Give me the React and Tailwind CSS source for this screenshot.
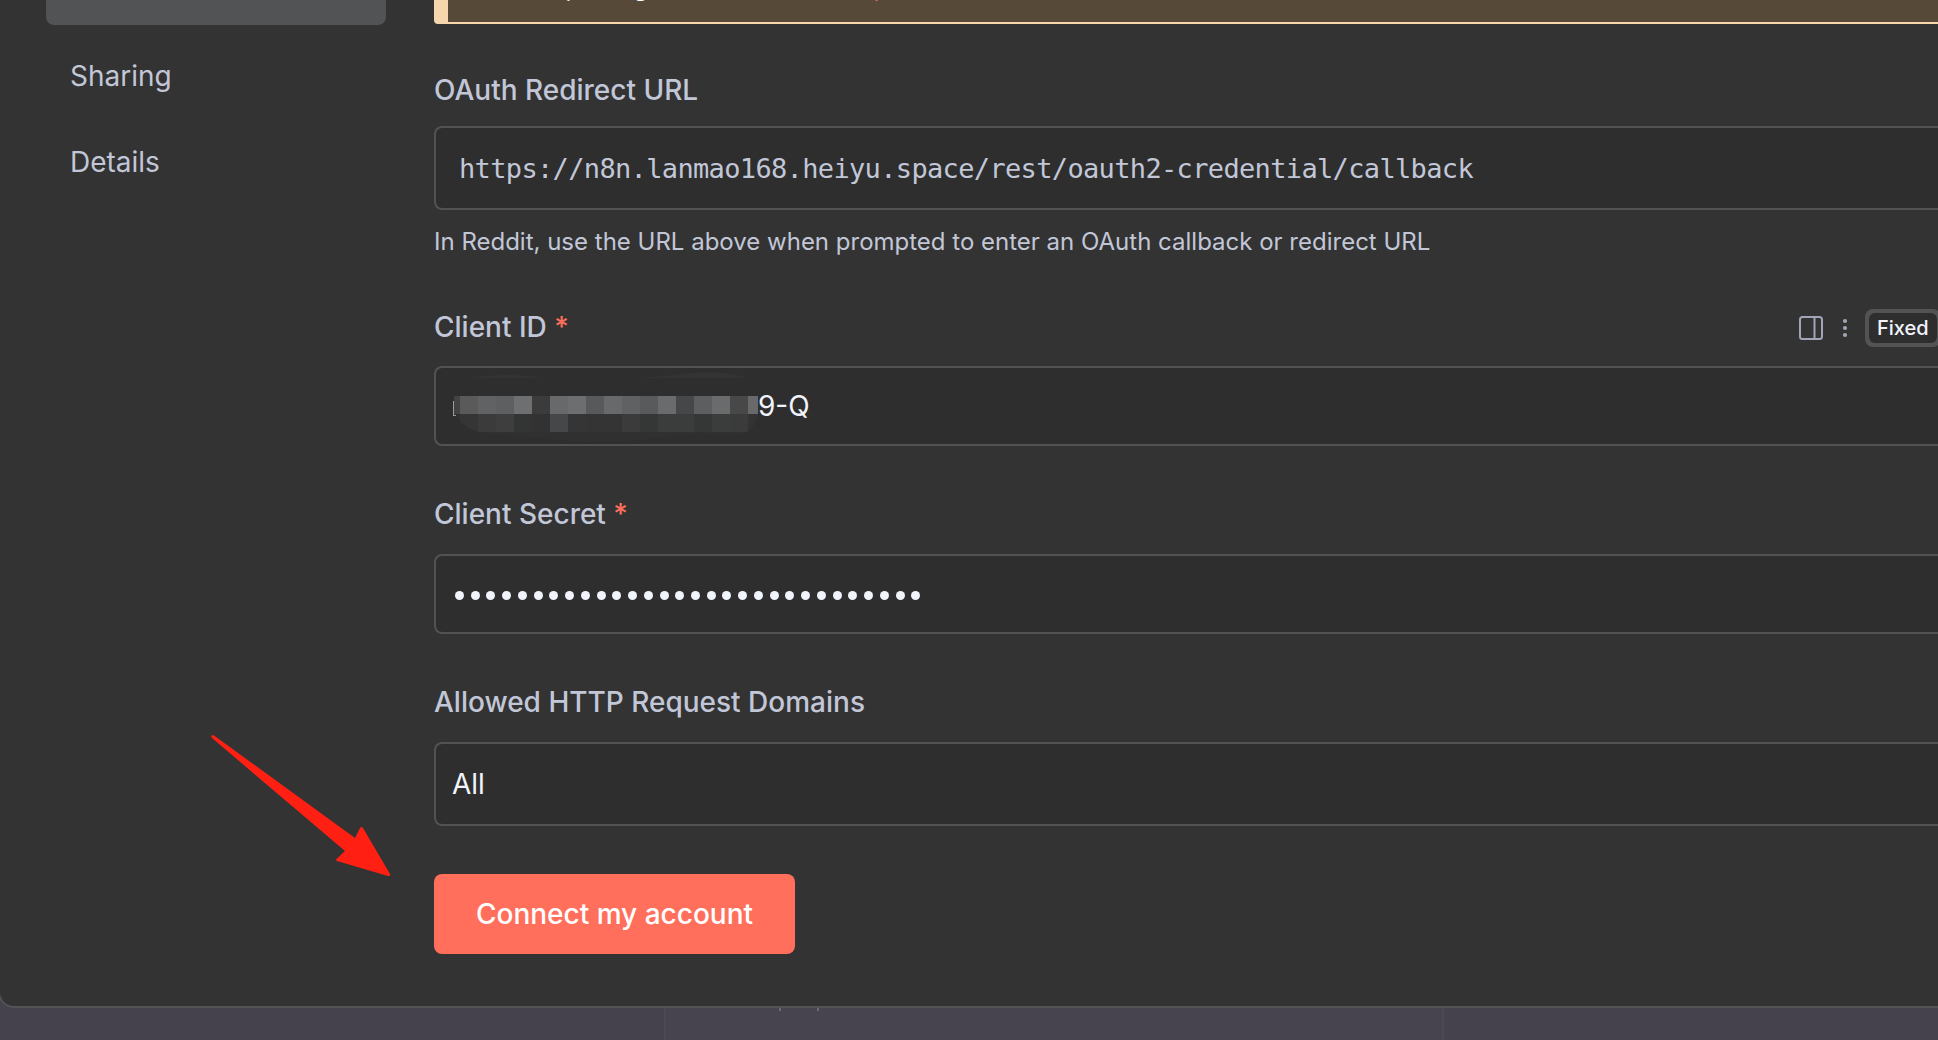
const REDACTED_TOP = ["#5a5a5b","#616264","#5e5f60","#6e6f71","#3b3b3b","#68696b","#6d6e70","#58595b","#68696b","#606163","#595a5c","#6a6b6d","#464748","#5d5e60","#6a6b6d","#484848","#68696b"];
const REDACTED_BOTTOM = ["#353535","#3b3b3b","#3e3e3e","#333534","#323232","#464749","#353535","#343434","#343434","#3b3b3b","#343736","#3b3d3c","#3b3d3c","#343736","#3b3d3c","#3b3b3b","#333333"];

function Label({ children, required }) {
  return (
    <div className="flex h-10 items-center text-[28px] leading-10 font-medium whitespace-pre text-[#c2c7d8]">
      {children}
      {required && <span className="text-[#ff6f5c]"> *</span>}
    </div>
  );
}

function Field({ className, children }) {
  return (
    <div className={`flex shrink-0 items-center rounded-l-lg border-2 border-r-0 border-[#525252] bg-[#2e2e2e] text-[28px] text-[#f2f4fb] ${className}`}>
      {children}
    </div>
  );
}

function Redaction() {
  return (
    <svg className="ml-3 h-[76px] w-[310px] shrink-0" viewBox="0 0 310 76">
      <path d="M24 10q30-6 72 0ZM190 10q30-2 50-5q44-2 58 5Z" fill="#323433" />
      <path d="M5 33h1v14h2v1h-3Z" fill="#9b9b9b" />
      <clipPath id="smudge"><path d="M6 28H310V47Q305 64 292 67Q270 70 255 65Q190 74 140 74Q80 70 40 66Q14 62 8 46H6Z" /></clipPath>
      <g clipPath="url(#smudge)" shapeRendering="crispEdges">
        <rect x="6" y="28" width="304" height="48" fill="#303030" />
        <rect x="6" y="28" width="6" height="18" fill="#434343" />
        {REDACTED_TOP.map((c, i) => <rect key={i} x={12 + i * 18} y="28" width="18" height="18" fill={c} />)}
        {REDACTED_BOTTOM.map((c, i) => <rect key={i} x={12 + i * 18} y="46" width="18" height="18" fill={c} />)}
      </g>
    </svg>
  );
}

export default function App() {
  return (
    <div className="relative h-[1040px] w-[1938px] overflow-hidden bg-[#45414d] font-['Inter',sans-serif]">
      <div className="-ml-0.5 flex h-[1008px] w-[1950px] overflow-hidden rounded-bl-2xl border-b-2 border-l-2 border-[#525355] bg-[#333333]">
        <nav className="ml-[46px] flex w-[340px] shrink-0 flex-col text-[28px] leading-10 text-[#c2c7d8]">
          <div className="-mt-[45px] flex h-[70px] shrink-0 items-center rounded-lg bg-[#525355] pl-6">Connection</div>
          <div className="mt-4 flex h-[70px] items-center pl-6">Sharing</div>
          <div className="mt-4 flex h-[70px] items-center pl-6">Details</div>
        </nav>
        <main className="ml-12 flex flex-1 flex-col">
          <div className="-mt-12 flex h-[72px] shrink-0 items-center rounded-l border-2 border-l-[14px] border-[#f6d7ad] bg-[#564938] pl-4 text-[24px] whitespace-pre text-white">
            Need help filling out these fields? <span className="ml-[7px] text-[#ff6f5c]">Open docs</span>
          </div>
          <div className="mt-[46px]"><Label>OAuth Redirect URL</Label></div>
          <Field className="mt-4 h-[84px] pt-[3px] pl-[23px]">
            <span className="font-['DejaVu_Sans_Mono',monospace] text-[27px] tracking-[-0.655px] text-[#c2c7d8]">https://n8n.lanmao168.heiyu.space/rest/oauth2-credential/callback</span>
          </Field>
          <div className="mt-4 h-8 text-[24px] leading-8 whitespace-nowrap text-[#c2c7d8]">In Reddit, use the URL above when prompted to enter an OAuth callback or redirect URL</div>
          <div className="mt-[49px] flex h-[42px] items-center">
            <div className="self-start"><Label required>Client ID</Label></div>
            <svg className="ml-[1230px] size-6 shrink-0" viewBox="0 0 24 24" fill="none" stroke="#a0a6b7" strokeWidth="2">
              <rect x="1" y="1" width="22" height="22" rx="2.5" />
              <path d="M15.5 1v22" />
            </svg>
            <svg className="ml-[19px] size-5 shrink-0" viewBox="0 0 20 20" fill="#a0a6b7">
              <circle cx="3" cy="3" r="2.1" /><circle cx="3" cy="10" r="2.1" /><circle cx="3" cy="17" r="2.1" />
            </svg>
            <div className="ml-[3px] flex h-[38px] shrink-0 rounded-lg bg-[#525355] p-1">
              <div className="flex w-[68px] items-center justify-center rounded-md bg-[#2e2e2e] text-[20px] font-medium text-[#f2f4fb]">Fixed</div>
            </div>
          </div>
          <Field className="mt-[17px] h-20"><Redaction /><span>9-Q</span></Field>
          <div className="mt-12"><Label required>Client Secret</Label></div>
          <Field className="mt-5 h-20 gap-[6.747px] pt-[3px] pl-[19px]">
            {Array.from({ length: 30 }, (_, i) => <span key={i} className="size-[9px] shrink-0 rounded-full bg-[#f2f4fb]" />)}
          </Field>
          <div className="mt-12"><Label>Allowed HTTP Request Domains</Label></div>
          <Field className="mt-5 h-[84px] pl-4">All</Field>
          <button className="mt-12 h-20 w-[361px] shrink-0 rounded-lg bg-[#ff6f5c] text-[28px] font-medium text-white">Connect my account</button>
        </main>
      </div>
      <div className="ml-[664px] flex h-8 w-[780px] border-x-2 border-[#4b4854] bg-[#474450]">
        <span className="ml-[113px] h-[3px] w-0.5 bg-[#6b6974]" />
        <span className="ml-9 h-[3px] w-0.5 bg-[#6b6974]" />
      </div>
      <svg className="absolute top-[734px] left-[210px] h-[144px] w-[182px]" viewBox="0 0 182 144" fill="#ff2013">
        <path d="M1.5 2Q2 .5 4 1.5L145 104L150 94Q151.500 92 153 94L180 140Q181 142.500 178 142L127 127Q125 126 127 124.500L135 117L2 4Q1 3 1.500 2Z" />
      </svg>
    </div>
  );
}
